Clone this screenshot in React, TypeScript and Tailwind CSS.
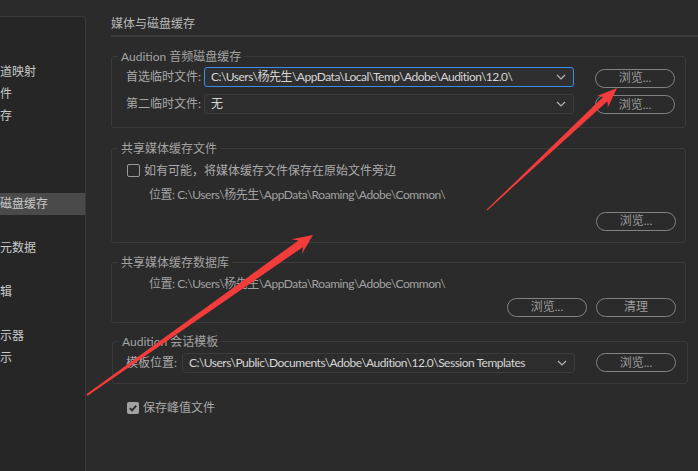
import React from 'react';

const FONT = { fontFamily: 'Lato, "Noto Sans CJK SC", sans-serif' };

const sidebarRows = ['', '', '道映射', '件', '存', '', '', '', '磁盘缓存', '', '元数据', '', '辑', '', '示器', '示'];

const Chevron = () => (
    <svg width="10" height="6" viewBox="0 0 10 6" className="shrink-0">
        <polyline points="1,1 5,5 9,1" fill="none" stroke="#b5b5b5" strokeWidth="1.2" />
    </svg>
);

const Select = ({ value, active, width }: { value: string; active?: boolean; width: string }) => (
    <div
        className={`flex h-[20px] items-center justify-between rounded-[3px] border pl-[6px] pr-[7px] text-[12px] text-[#d6d6d6] ${width} ${
            active ? 'border-[#3a8de8] bg-[#2f2f2f]' : 'border-[#3b3b3b] bg-[#2d2d2d]'
        }`}
    >
        <span className="whitespace-nowrap leading-[16px] tracking-[-0.5px]">{value}</span>
        <Chevron />
    </div>
);

const Btn = ({ label }: { label: string }) => (
    <div className="flex h-[19px] w-[80px] items-center justify-center rounded-full border-[1.5px] border-[#838383] text-[12px] leading-none text-[#9c9c9c]">
        {label}
    </div>
);

// legend sits on the top border; inner padding is kept off the fieldset so the legend stays put
const Group = ({
    title,
    className,
    inner,
    children,
}: {
    title: string;
    className: string;
    inner: string;
    children: React.ReactNode;
}) => (
    <fieldset className={`rounded-[3px] border border-[#3a3a3a] ${className}`}>
        <legend className="ml-[6px] px-[3px] text-[12px] leading-[16px] text-[#a3a3a3]">{title}</legend>
        <div className={inner}>{children}</div>
    </fieldset>
);

const Box = ({ checked }: { checked?: boolean }) =>
    checked ? (
        <div className="flex h-[12px] w-[12px] items-center justify-center rounded-[2px] bg-[#a2a2a2]">
            <svg width="10" height="10" viewBox="0 0 10 10">
                <polyline points="1.8,5.2 4,7.4 8.3,2.6" fill="none" stroke="#2b2b2b" strokeWidth="1.8" />
            </svg>
        </div>
    ) : (
        <div className="h-[13px] w-[13px] rounded-[2px] border-[1.5px] border-[#9a9a9a]" />
    );

const Location = ({ className }: { className: string }) => (
    <div className={`h-[16px] pl-[22px] text-[12px] leading-[16px] tracking-[-0.45px] text-[#a2a2a2] ${className}`}>
        位置: C:\Users\杨先生\AppData\Roaming\Adobe\Common\
    </div>
);

export default function App() {
    return (
        <div className="relative flex h-[471px] w-[698px] overflow-hidden bg-[#2b2b2b]" style={FONT}>
            {/* ------- sidebar ------- */}
            <div className="mt-[16px] flex w-[86px] shrink-0 flex-col rounded-tr-[4px] border-r border-t border-[#3a3a3a] bg-[#262626]">
                {sidebarRows.map((t, i) => (
                    <div
                        key={i}
                        className={`flex h-[22px] shrink-0 items-center whitespace-nowrap text-[12px] text-[#c9c9c9] ${
                            t === '磁盘缓存' ? 'bg-[#4a4a4a]' : ''
                        }`}
                    >
                        {t}
                    </div>
                ))}
            </div>

            {/* ------- main ------- */}
            <div className="flex flex-1 flex-col pl-[25px] pr-[12px] pt-[16px]">
                <div className="text-[12px] leading-[16px] text-[#b8b8b8]">媒体与磁盘缓存</div>
                <div className="-mr-[12px] mt-[3px] h-[1.5px] bg-[#3a3a3a]" />

                <Group title="Audition 音频磁盘缓存" className="mt-[12px] pb-[13px]" inner="pl-[14px] pr-[9px]">
                    <div className="mt-[2px] flex h-[20px] items-center">
                        <span className="w-[78px] text-[12px] text-[#a9a9a9]">首选临时文件:</span>
                        <Select value="C:\Users\杨先生\AppData\Local\Temp\Adobe\Audition\12.0\" active width="w-[370px]" />
                        <div className="ml-[21px] mt-[3px]">
                            <Btn label="浏览..." />
                        </div>
                    </div>
                    <div className="mt-[7px] flex h-[20px] items-center">
                        <span className="w-[78px] text-[12px] text-[#a9a9a9]">第二临时文件:</span>
                        <Select value="无" width="w-[370px]" />
                        <div className="ml-[21px] mt-[2px]">
                            <Btn label="浏览..." />
                        </div>
                    </div>
                </Group>

                <Group title="共享媒体缓存文件" className="mt-[13px] pb-[11px]" inner="pl-[15px] pr-[9px]">
                    <div className="mt-[6px] flex h-[16px] items-center gap-[4px]">
                        <Box />
                        <span className="text-[12px] text-[#aaaaaa]">如有可能，将媒体缓存文件保存在原始文件旁边</span>
                    </div>
                    <Location className="mt-[8px]" />
                    <div className="mt-[9px] flex justify-end">
                        <Btn label="浏览..." />
                    </div>
                </Group>

                <Group title="共享媒体缓存数据库" className="mt-[12px] pb-[5px]" inner="pl-[15px] pr-[9px]">
                    <Location className="mt-[5px]" />
                    <div className="mt-[6px] flex justify-end gap-[9px]">
                        <Btn label="浏览..." />
                        <Btn label="清理" />
                    </div>
                </Group>

                <Group
                    title="Audition 会话模板"
                    className="-mr-[2px] ml-[1px] mt-[11px] pb-[10px]"
                    inner="pl-[13px] pr-[9px]"
                >
                    <div className="mt-[3px] flex h-[20px] items-center">
                        <span className="w-[56px] text-[12px] text-[#a9a9a9]">模板位置:</span>
                        <Select
                            value="C:\Users\Public\Documents\Adobe\Audition\12.0\Session Templates"
                            width="w-[393px]"
                        />
                        <div className="ml-[21px]">
                            <Btn label="浏览..." />
                        </div>
                    </div>
                </Group>

                <div className="ml-[16px] mt-[16px] flex h-[16px] items-center gap-[4px]">
                    <Box checked />
                    <span className="text-[12px] text-[#a9a9a9]">保存峰值文件</span>
                </div>
            </div>

            {/* ------- annotation arrows ------- */}
            <svg className="pointer-events-none absolute inset-0" width="698" height="471" viewBox="0 0 698 471">
                <polygon
                    fill="#f23b3b"
                    points="486.7,209.6 603.2,96.8 596.9,95.9 617,88 607.9,107.5 607.4,101.2 487.3,210.4"
                />
                <polygon
                    fill="#f23b3b"
                    points="86.4,394.2 298.5,240.4 291.5,239.3 313,235 301.9,253.9 303.1,246.9 87.6,395.8"
                />
            </svg>
        </div>
    );
}
